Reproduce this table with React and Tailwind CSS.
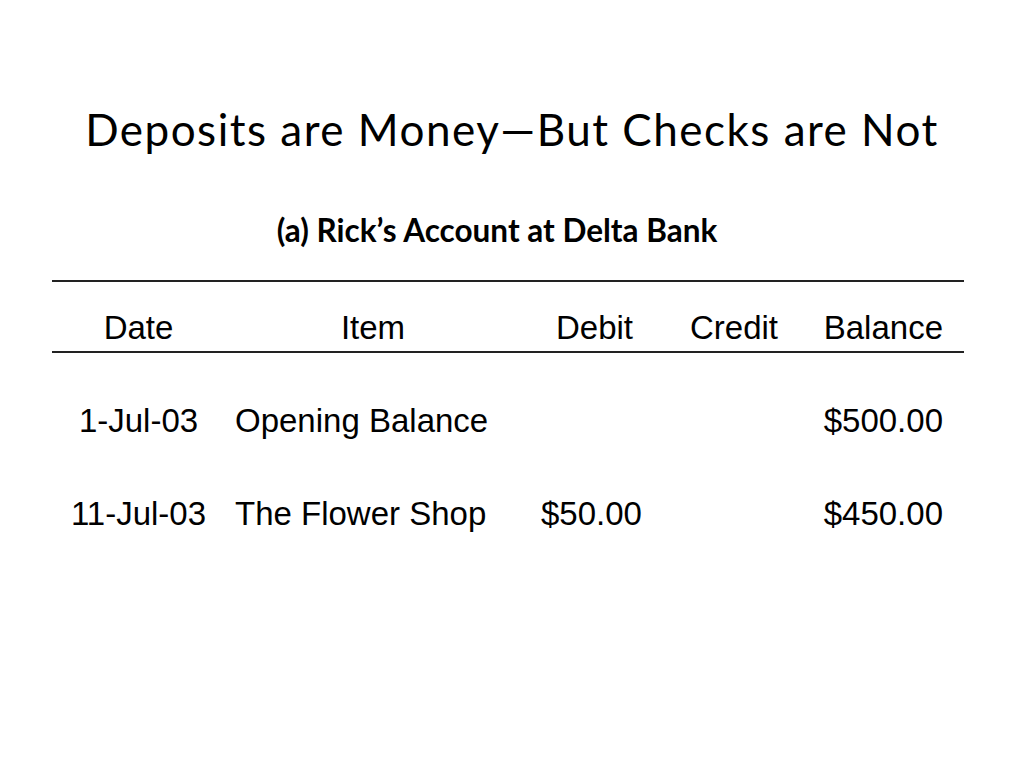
const rows = [
  { date: '1-Jul-03', item: 'Opening Balance', debit: '', credit: '', balance: '$500.00' },
  { date: '11-Jul-03', item: 'The Flower Shop', debit: '$50.00', credit: '', balance: '$450.00' },
];

export default function App() {
  return (
    <div className="w-[1024px] h-[768px] bg-white text-black overflow-hidden">
      <h1 className="pt-[103px] text-center text-[44px] leading-[52px] tracking-[1.5px] font-['Lato',sans-serif]">
        Deposits are Money—But Checks are Not
      </h1>
      <h2 className="mt-[57px] pr-[30px] text-center text-[31.5px] leading-[36px] font-bold font-['Lato',sans-serif]">
        (a) Rick’s Account at Delta Bank
      </h2>

      <div className="w-[912px] ml-[52px] mt-[32px] font-['Liberation_Sans',Arial,sans-serif] text-[33px] leading-[38px]">
        <div className="border-t-2 border-[#222]" />
        <div className="grid grid-cols-[173px_296px_147px_132px_164px] pt-[27px] pb-[4px] text-center">
          <div>Date</div>
          <div>Item</div>
          <div>Debit</div>
          <div>Credit</div>
          <div className="text-right pr-[21px]">Balance</div>
        </div>
        <div className="border-t-2 border-[#222]" />
        <div className="flex flex-col gap-[55px] pt-[49px]">
          {rows.map((r, i) => (
            <div key={i} className="grid grid-cols-[173px_296px_147px_132px_164px]">
              <div className="text-center">{r.date}</div>
              <div className="pl-[10px]">{r.item}</div>
              <div className="pl-[20px]">{r.debit}</div>
              <div>{r.credit}</div>
              <div className="text-right pr-[21px]">{r.balance}</div>
            </div>
          ))}
        </div>
      </div>
    </div>
  );
}
